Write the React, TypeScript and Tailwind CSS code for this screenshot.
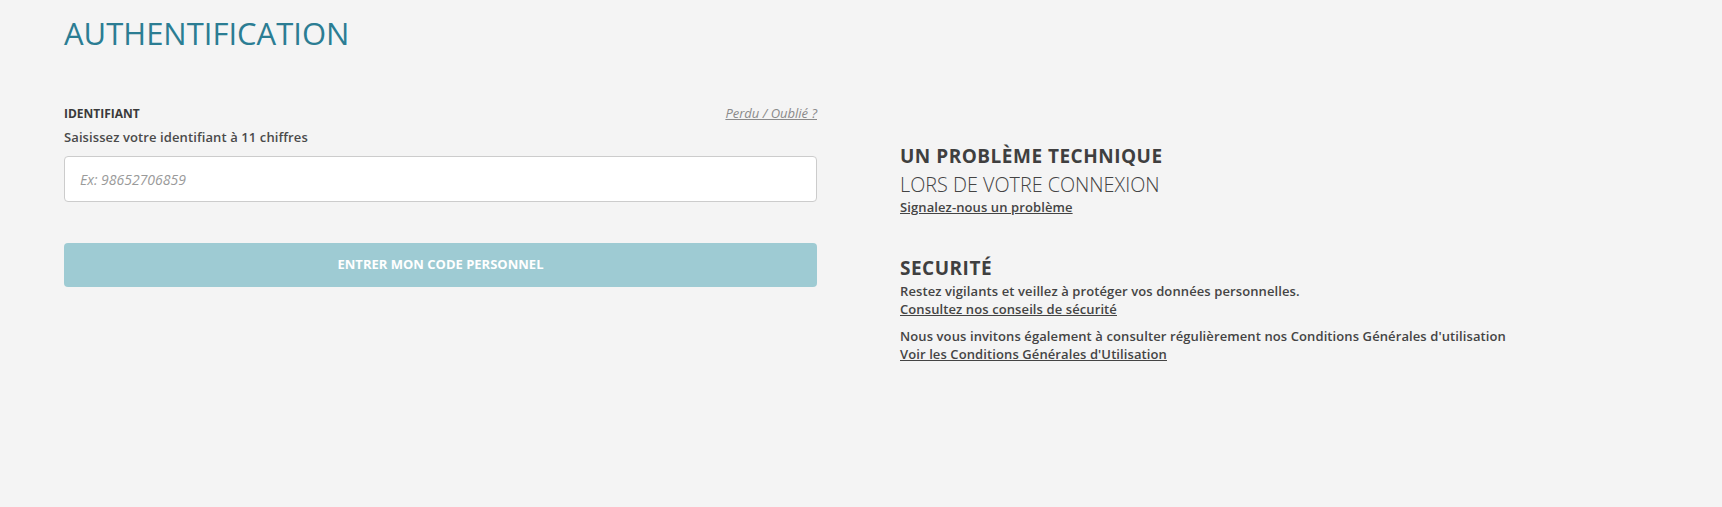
import React from "react";

export default function App() {
  return (
    <div className="min-h-[507px] bg-[#f4f4f4] font-['Open_Sans',sans-serif] text-[#444444] pl-[64px] pt-[12px]">
      <h1 className="text-[31px] leading-[43px] font-normal text-[#2b7d93]">AUTHENTIFICATION</h1>
      <div className="flex gap-[83px] mt-[50px]">
        <div className="w-[753px] flex flex-col">
          <div className="flex items-baseline justify-between">
            <label className="text-[12px] leading-[16px] font-bold text-[#3a3a3a]">IDENTIFIANT</label>
            <a className="text-[13px] leading-[16px] italic underline text-[#8a8a8a]">Perdu / Oublié ?</a>
          </div>
          <p className="mt-[6px] text-[13px] leading-[18px] font-semibold tracking-[0.1px] text-[#4a4a4a]">
            Saisissez votre identifiant à 11 chiffres
          </p>
          <input
            className="mt-[10px] h-[46px] w-full bg-white border border-[#cccccc] rounded-[4px] pl-[15px] text-[14px] italic placeholder:text-[#9a9a9a] outline-none"
            placeholder="Ex: 98652706859"
          />
          <button className="mt-[41px] h-[44px] w-full rounded-[4px] bg-[#9ecbd3] text-white text-[13px] font-bold">
            ENTRER MON CODE PERSONNEL
          </button>
        </div>
        <div className="flex flex-col pt-[39px]">
          <h2 className="text-[19px] leading-[24px] font-bold tracking-[0.5px] text-[#3f3f3f]">UN PROBLÈME TECHNIQUE</h2>
          <p className="mt-[4px] text-[19.8px] leading-[26px] font-light text-[#444444]">LORS DE VOTRE CONNEXION</p>
          <a className="text-[13px] leading-[18px] font-semibold tracking-[0.1px] underline text-[#444444]">Signalez-nous un problème</a>
          <h2 className="mt-[40px] text-[19px] leading-[24px] font-bold tracking-[0.5px] text-[#3f3f3f]">SECURITÉ</h2>
          <p className="mt-[2px] text-[13px] leading-[18px] font-semibold tracking-[0.1px]">
            Restez vigilants et veillez à protéger vos données personnelles.
          </p>
          <a className="text-[13px] leading-[18px] font-semibold tracking-[0.1px] underline">Consultez nos conseils de sécurité</a>
          <p className="mt-[9px] text-[13px] leading-[18px] font-semibold tracking-[0.1px]">
            Nous vous invitons également à consulter régulièrement nos Conditions Générales d'utilisation
          </p>
          <a className="text-[13px] leading-[18px] font-semibold tracking-[0.1px] underline">Voir les Conditions Générales d'Utilisation</a>
        </div>
      </div>
    </div>
  );
}
